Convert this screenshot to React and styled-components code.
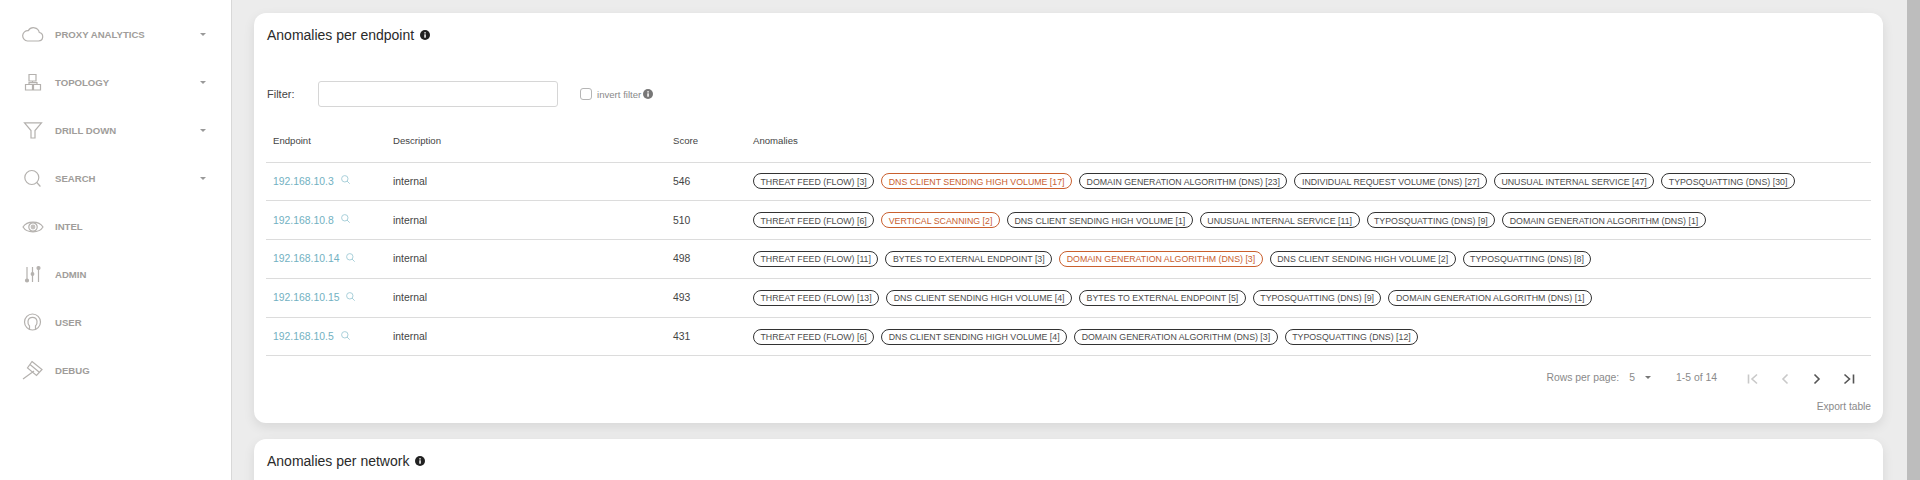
import styled, { createGlobalStyle } from "styled-components";

const GlobalStyle = createGlobalStyle`
  html, body {
    margin: 0;
    height: 480px;
    overflow: hidden;
    background: #ececec;
    font-family: "Liberation Sans", Arial, sans-serif;
  }
`;

const Page = styled.div`
  display: flex;
  width: 1920px;
  height: 480px;
  overflow: hidden;
  background: #ececec;
`;

const Sidebar = styled.nav`
  flex: 0 0 231px;
  height: 100%;
  box-sizing: content-box;
  background: #fff;
  border-right: 1px solid #d8d8d8;
  padding-top: 10px;
`;

const NavItem = styled.div`
  display: flex;
  align-items: center;
  height: 48px;
  padding: 0 25px 0 22px;
`;

const NavIcon = styled.svg`
  flex: 0 0 22px;
  width: 22px;
  height: 22px;
  margin-top: 2px;
  fill: none;
  stroke: #b4b1ae;
  stroke-width: 1.2;
`;

const NavLabel = styled.span`
  flex: 1;
  margin-left: 11px;
  font-size: 9.6px;
  font-weight: 700;
  color: #a09d9a;
`;

const Caret = styled.span`
  width: 0;
  height: 0;
  border-left: ${(p) => p.$half || 3}px solid transparent;
  border-right: ${(p) => p.$half || 3}px solid transparent;
  border-top: 3px solid ${(p) => p.$color || "#999"};
`;

const Main = styled.main`
  flex: 1;
  padding: 0 24px 0 22px;
  min-width: 0;
`;

const TopRow = styled.div`
  display: flex;
  gap: 34px;
  height: 0;
  margin-bottom: 13px;
`;

const TopCard = styled.div`
  flex: 1;
  height: 0;
  box-shadow: 0 2px 10px rgba(0, 0, 0, 0.14);
`;

const Card = styled.section`
  background: #fff;
  border-radius: 12px;
  box-shadow: 0 4px 12px rgba(0, 0, 0, 0.09);
  padding: 13px 12px ${(p) => p.$bottom || 0}px;
  margin-bottom: 16px;
`;

const Title = styled.h2`
  display: flex;
  align-items: center;
  gap: 6px;
  margin: 0;
  padding-left: 1px;
  height: 18px;
  font-size: 14px;
  font-weight: 400;
  color: #2a2a2a;
`;

const InfoIcon = styled.svg`
  width: 10px;
  height: 10px;
  flex: none;
`;

const FilterRow = styled.div`
  display: flex;
  align-items: center;
  height: 26px;
  margin-top: 37px;
  padding-left: 1px;
  font-size: 11px;
  color: #444;
`;

const FilterLabel = styled.label`
  width: 51px;
`;

const FilterInput = styled.div`
  box-sizing: border-box;
  width: 240px;
  height: 26px;
  background: #fff;
  border: 1px solid #d6d6d6;
  border-radius: 3px;
`;

const Checkbox = styled.span`
  box-sizing: border-box;
  width: 12px;
  height: 12px;
  margin-left: 22px;
  border: 1px solid #b5b5b5;
  border-radius: 3px;
`;

const InvertLabel = styled.span`
  display: flex;
  align-items: center;
  gap: 2px;
  margin-left: 5px;
  font-size: 9.6px;
  color: #8a8a8a;
`;

const Table = styled.table`
  table-layout: fixed;
  width: 100%;
  margin-top: 14px;
  border-collapse: collapse;
`;

const HeadCell = styled.th`
  height: 41px;
  padding: 0 7px 2px;
  box-sizing: border-box;
  text-align: left;
  font-size: 9.6px;
  font-weight: 400;
  color: #444;
  border-bottom: 1px solid #dcdcdc;
`;

const Cell = styled.td`
  height: 37.8px;
  padding: 0 7px;
  font-size: 10.4px;
  color: #444;
  border-bottom: 1px solid #dcdcdc;
`;

const EndpointLink = styled.span`
  display: inline-flex;
  align-items: center;
  gap: 7px;
  color: #72b1c2;
`;

const LookupIcon = styled.svg`
  width: 9px;
  height: 9px;
  margin-top: -3px;
  fill: none;
  stroke: #a9d0da;
  stroke-width: 1;
`;

const Chips = styled.div`
  display: flex;
  gap: 7px;
`;

const Chip = styled.span`
  box-sizing: border-box;
  display: inline-flex;
  align-items: center;
  height: 16px;
  padding: 1px 6.5px 0;
  font-size: 8.8px;
  white-space: nowrap;
  border-radius: 8px;
  color: ${(p) => (p.$alert ? "#c9602f" : "#4c4c4c")};
  border: 1px solid ${(p) => (p.$alert ? "#c9602f" : "#333")};
`;

const Pagination = styled.div`
  display: flex;
  align-items: center;
  justify-content: flex-end;
  height: 42px;
  padding-right: 14px;
  font-size: 10.4px;
  color: #8a8a8a;
`;

const PageSize = styled.span`
  display: inline-flex;
  align-items: center;
  gap: 10px;
  margin: 0 25px 0 10px;
`;

const PageButtons = styled.div`
  display: flex;
  gap: 16px;
  margin: 4px 0 0 28px;
`;

const PageIcon = styled.svg`
  width: 16px;
  height: 16px;
  fill: none;
  stroke: ${(p) => (p.$off ? "#c9c9c9" : "#555")};
  stroke-width: 1.6;
`;

const ExportRow = styled.div`
  height: 25px;
  text-align: right;
  font-size: 10.2px;
  color: #8a8a8a;
  padding-top: 3px;
  box-sizing: border-box;
`;

const Scrollbar = styled.div`
  flex: 0 0 13px;
  height: 100%;
  background: #bdbdbd;
`;

const navItems = [
  {
    label: "PROXY ANALYTICS",
    menu: true,
    icon: <path d="M5.5 17h11a4.3 4.3 0 0 0 .8-8.5A6 6 0 0 0 6.3 6.6 5.2 5.2 0 0 0 5.500 17z" />,
  },
  {
    label: "TOPOLOGY",
    menu: true,
    icon: (
      <path d="M7 2.5h7v6.5H7zM3.5 12.5h7v5.5h-7zM11.5 12.5h7v5.5h-7zM10.5 9v1.7H7v1.8M10.5 10.7H15v1.8" />
    ),
  },
  { label: "DRILL DOWN", menu: true, icon: <path d="M2.5 2.8h17L13 10.5v7.5H9v-7.5z" /> },
  {
    label: "SEARCH",
    menu: true,
    icon: (
      <>
        <circle cx="9.8" cy="9.5" r="7" />
        <path d="M14.8 14.5l3.6 4" />
      </>
    ),
  },
  {
    label: "INTEL",
    icon: (
      <>
        <path d="M1 11c4-6.5 16-6.5 20 0-4 6.5-16 6.5-20 0z" />
        <circle cx="11" cy="11" r="4.2" />
        <circle cx="11" cy="11" r="2.4" fill="#c4c1be" stroke="none" />
      </>
    ),
  },
  {
    label: "ADMIN",
    icon: (
      <>
        <path d="M5 3v15M10.5 3v15M16.5 3v15" />
        <circle cx="5" cy="16.5" r="1.5" fill="#b4b1ae" />
        <circle cx="10.5" cy="10" r="1.3" fill="#b4b1ae" />
        <circle cx="16.5" cy="4" r="1.5" fill="#b4b1ae" />
      </>
    ),
  },
  {
    label: "USER",
    icon: (
      <>
        <circle cx="10.5" cy="10" r="8" />
        <path d="M7.5 17.3V14C6 12.5 5.8 10.5 6 9a4.6 4.6 0 0 1 9 0c.2 1.5 0 3.5-1.5 5v3.3" />
      </>
    ),
  },
  {
    label: "DEBUG",
    icon: <path d="M1 19l11-8M10 1.5l10 8-5.5 6-9-7.500zM8 4.500l9 7.500" />,
  },
];

const rows = [
  {
    ip: "192.168.10.3",
    score: 546,
    chips: [
      ["THREAT FEED (FLOW) [3]"],
      ["DNS CLIENT SENDING HIGH VOLUME [17]", true],
      ["DOMAIN GENERATION ALGORITHM (DNS) [23]"],
      ["INDIVIDUAL REQUEST VOLUME (DNS) [27]"],
      ["UNUSUAL INTERNAL SERVICE [47]"],
      ["TYPOSQUATTING (DNS) [30]"],
    ],
  },
  {
    ip: "192.168.10.8",
    score: 510,
    chips: [
      ["THREAT FEED (FLOW) [6]"],
      ["VERTICAL SCANNING [2]", true],
      ["DNS CLIENT SENDING HIGH VOLUME [1]"],
      ["UNUSUAL INTERNAL SERVICE [11]"],
      ["TYPOSQUATTING (DNS) [9]"],
      ["DOMAIN GENERATION ALGORITHM (DNS) [1]"],
    ],
  },
  {
    ip: "192.168.10.14",
    score: 498,
    chips: [
      ["THREAT FEED (FLOW) [11]"],
      ["BYTES TO EXTERNAL ENDPOINT [3]"],
      ["DOMAIN GENERATION ALGORITHM (DNS) [3]", true],
      ["DNS CLIENT SENDING HIGH VOLUME [2]"],
      ["TYPOSQUATTING (DNS) [8]"],
    ],
  },
  {
    ip: "192.168.10.15",
    score: 493,
    chips: [
      ["THREAT FEED (FLOW) [13]"],
      ["DNS CLIENT SENDING HIGH VOLUME [4]"],
      ["BYTES TO EXTERNAL ENDPOINT [5]"],
      ["TYPOSQUATTING (DNS) [9]"],
      ["DOMAIN GENERATION ALGORITHM (DNS) [1]"],
    ],
  },
  {
    ip: "192.168.10.5",
    score: 431,
    chips: [
      ["THREAT FEED (FLOW) [6]"],
      ["DNS CLIENT SENDING HIGH VOLUME [4]"],
      ["DOMAIN GENERATION ALGORITHM (DNS) [3]"],
      ["TYPOSQUATTING (DNS) [12]"],
    ],
  },
];

const Info = ({ color = "#222" }) => (
  <InfoIcon viewBox="0 0 10 10">
    <circle cx="5" cy="5" r="5" fill={color} />
    <rect x="4.3" y="4.3" width="1.5" height="3.4" fill="#fff" />
    <rect x="4.3" y="2.2" width="1.5" height="1.300" fill="#fff" />
  </InfoIcon>
);

const App = () => {
  return (
    <Page>
      <GlobalStyle />
      <Sidebar>
        {navItems.map((item) => (
          <NavItem key={item.label}>
            <NavIcon viewBox="0 0 22 22">{item.icon}</NavIcon>
            <NavLabel>{item.label}</NavLabel>
            {item.menu && <Caret />}
          </NavItem>
        ))}
      </Sidebar>
      <Main>
        <TopRow>
          <TopCard />
          <TopCard />
        </TopRow>
        <Card>
          <Title>
            Anomalies per endpoint <Info />
          </Title>
          <FilterRow>
            <FilterLabel>Filter:</FilterLabel>
            <FilterInput />
            <Checkbox />
            <InvertLabel>
              invert filter <Info color="#777" />
            </InvertLabel>
          </FilterRow>
          <Table>
            <colgroup>
              <col width="120" />
              <col width="280" />
              <col width="80" />
              <col />
            </colgroup>
            <thead>
              <tr>
                <HeadCell>Endpoint</HeadCell>
                <HeadCell>Description</HeadCell>
                <HeadCell>Score</HeadCell>
                <HeadCell>Anomalies</HeadCell>
              </tr>
            </thead>
            <tbody>
              {rows.map((row) => (
                <tr key={row.ip}>
                  <Cell>
                    <EndpointLink>
                      {row.ip}
                      <LookupIcon viewBox="0 0 9 9">
                        <circle cx="3.800" cy="3.800" r="3.200" />
                        <path d="M6 6l2.700 2.700" />
                      </LookupIcon>
                    </EndpointLink>
                  </Cell>
                  <Cell>internal</Cell>
                  <Cell>{row.score}</Cell>
                  <Cell>
                    <Chips>
                      {row.chips.map(([text, alert]) => (
                        <Chip key={text} $alert={alert}>
                          {text}
                        </Chip>
                      ))}
                    </Chips>
                  </Cell>
                </tr>
              ))}
            </tbody>
          </Table>
          <Pagination>
            Rows per page:
            <PageSize>
              5 <Caret $half={3.5} $color="#777" />
            </PageSize>
            1-5 of 14
            <PageButtons>
              <PageIcon $off viewBox="0 0 16 16">
                <path d="M3.500 3.500v9M12 3.500L7 8l5 4.500" />
              </PageIcon>
              <PageIcon $off viewBox="0 0 16 16">
                <path d="M10.500 3.500L6 8l4.500 4.500" />
              </PageIcon>
              <PageIcon viewBox="0 0 16 16">
                <path d="M5.500 3.500L10 8l-4.500 4.500" />
              </PageIcon>
              <PageIcon viewBox="0 0 16 16">
                <path d="M3.500 3.500L8.500 8l-5 4.500M12.500 3.500v9" />
              </PageIcon>
            </PageButtons>
          </Pagination>
          <ExportRow>Export table</ExportRow>
        </Card>
        <Card $bottom={60}>
          <Title>
            Anomalies per network <Info />
          </Title>
        </Card>
      </Main>
      <Scrollbar />
    </Page>
  );
};

export default App;
